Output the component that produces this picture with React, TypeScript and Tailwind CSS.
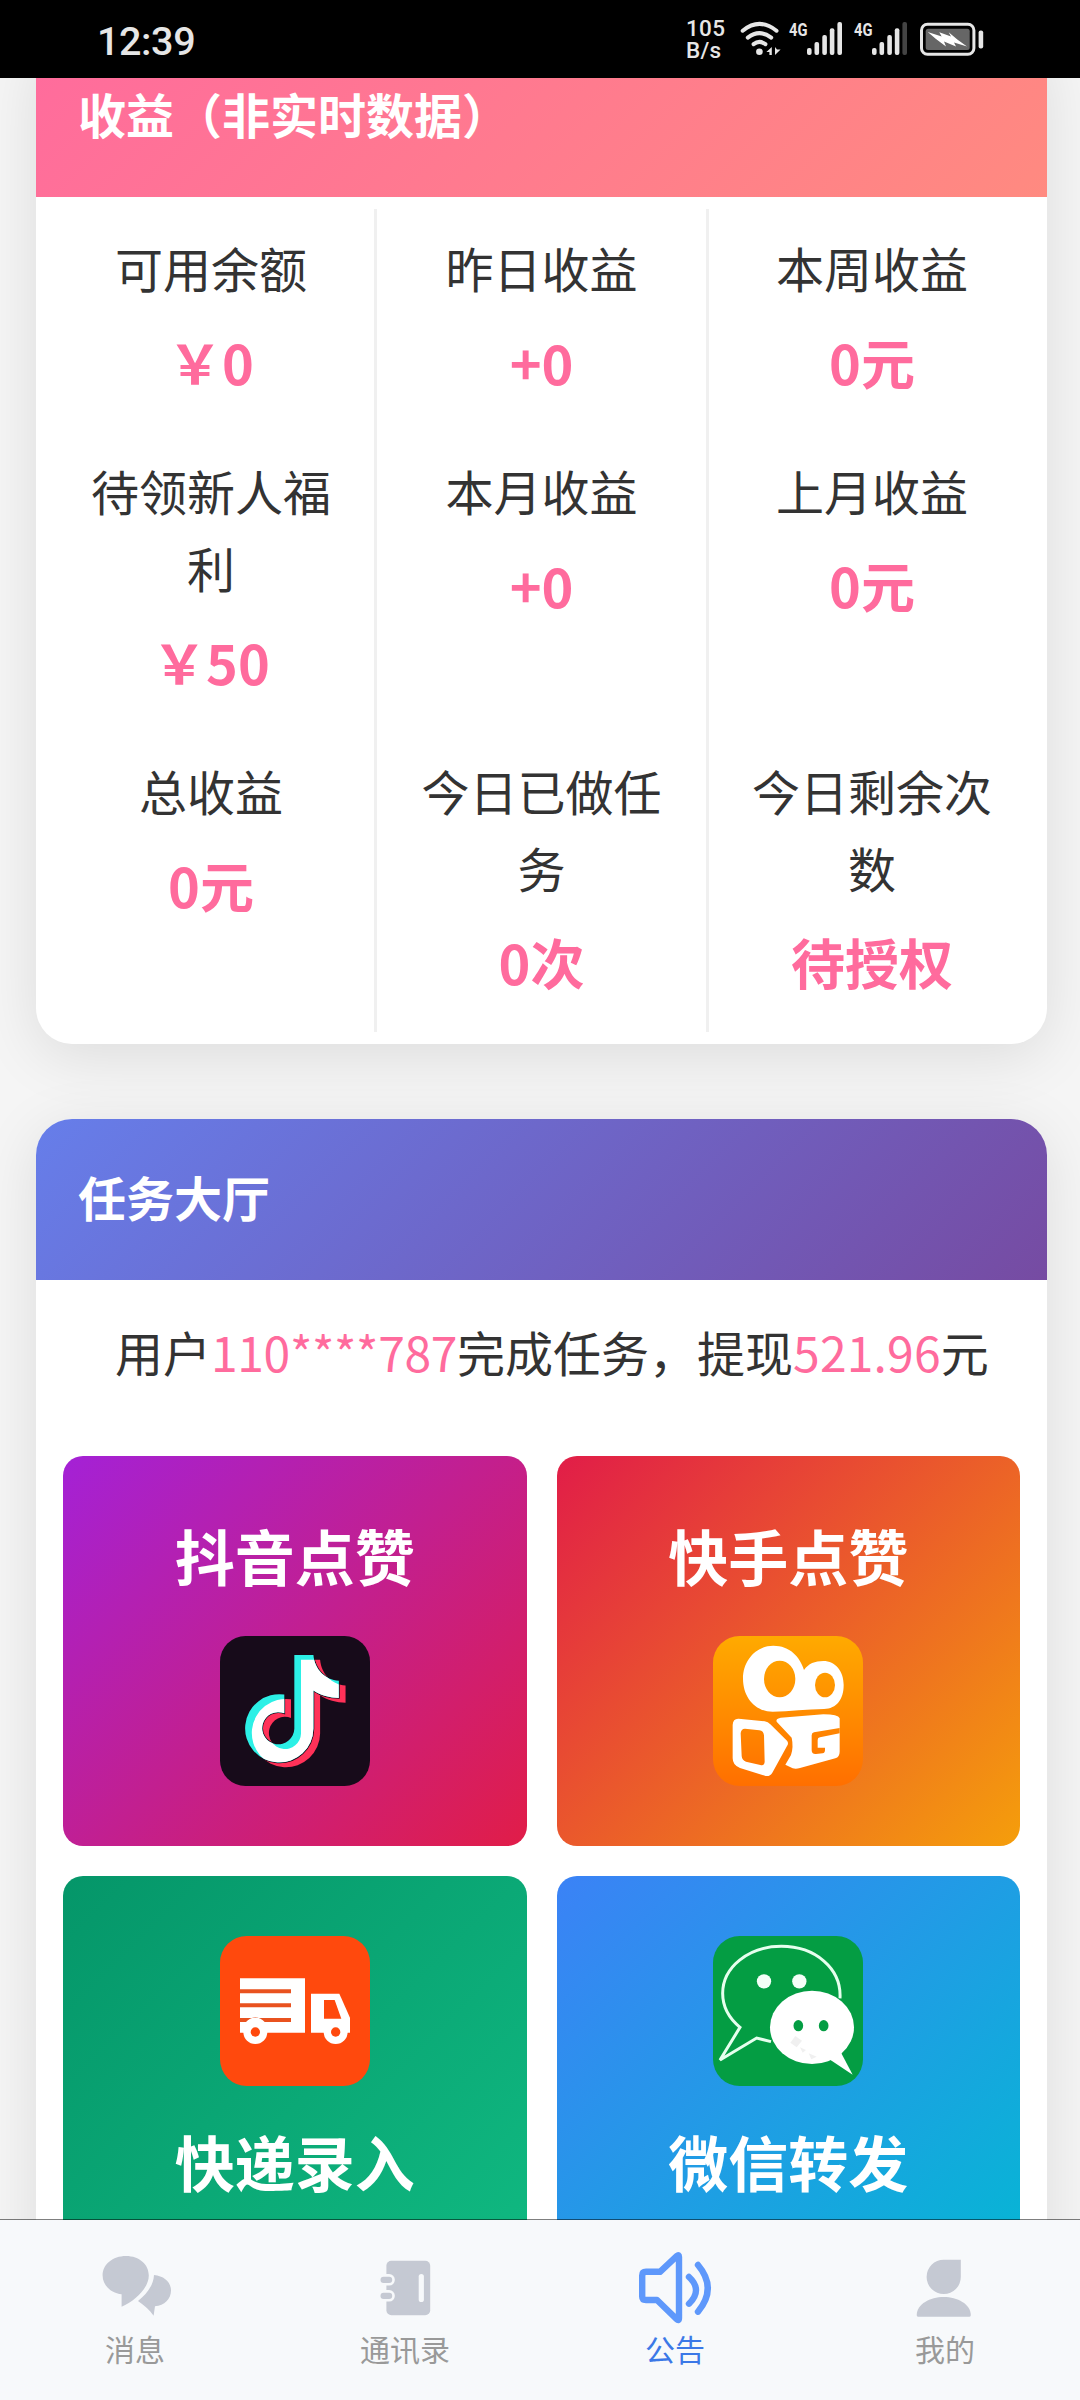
import React from "react";

type Stat = { label: string; value: string };

const stats: Stat[] = [
  { label: "可用余额", value: "￥0" },
  { label: "昨日收益", value: "+0" },
  { label: "本周收益", value: "0元" },
  { label: "待领新人福利", value: "￥50" },
  { label: "本月收益", value: "+0" },
  { label: "上月收益", value: "0元" },
  { label: "总收益", value: "0元" },
  { label: "今日已做任务", value: "0次" },
  { label: "今日剩余次数", value: "待授权" },
];

// left, middle and right column of the stats grid
const columnStyles = [
  "border-[#f0f0f0] pr-6 pl-[27px]",
  "border-[#f0f0f0] px-6",
  "border-transparent pr-[27px] pl-6",
];

const StatusIcons = () => (
  <svg width="250" height="78" viewBox="0 0 250 78" fill="#e6e6e6">
    {/* wifi */}
    <g fill="none" stroke="#e6e6e6" strokeWidth="4" strokeLinecap="round">
      <path d="M7.7 30.7Q24.5 17 41.5 30.7" />
      <path d="M12.8 37.6Q24.5 28.6 36.2 37.6" />
      <path d="M18.6 44.2Q24.5 39.6 30.4 44.2" />
    </g>
    <circle cx="24.4" cy="51.8" r="3.3" />
    <path d="M31.4 52L36.8 47V55H34.4V52Z" />
    <path d="M40 47L42 49.6H45.6L40 55Z" />

    {/* sim 1 */}
    <text x="54" y="36.4" fontSize="18.5" fontWeight="700" fontFamily="Roboto, sans-serif" textLength="18.5" lengthAdjust="spacingAndGlyphs">
      4G
    </text>
    <rect x="72" y="48" width="4.6" height="7" rx="2" />
    <rect x="79.5" y="42" width="4.6" height="13" rx="2" />
    <rect x="87.3" y="35" width="4.6" height="20" rx="2" />
    <rect x="94.8" y="28.3" width="4.6" height="26.7" rx="2" />
    <rect x="102.4" y="22" width="4.6" height="33" rx="2" />

    {/* sim 2 */}
    <text x="119" y="36.4" fontSize="18.5" fontWeight="700" fontFamily="Roboto, sans-serif" textLength="18.5" lengthAdjust="spacingAndGlyphs">
      4G
    </text>
    <rect x="137" y="48" width="4.6" height="7" rx="2" />
    <rect x="144.5" y="42" width="4.6" height="13" rx="2" />
    <rect x="152.3" y="35" width="4.6" height="20" rx="2" />
    <rect x="159.8" y="28.3" width="4.6" height="26.7" rx="2" />
    <rect x="167.4" y="22" width="4.6" height="33" rx="2" fill="#444" />

    {/* battery */}
    <rect x="186.5" y="24.2" width="52.4" height="30" rx="6" fill="none" stroke="#e6e6e6" strokeWidth="3" />
    <rect x="190.7" y="28.7" width="44" height="21.4" rx="2.5" fill="#666" />
    <rect x="243.6" y="30.5" width="4.6" height="18" rx="2" />
    <path d="M192.7 32L206.7 36.4 204.3 32.3 216 36.4 213.7 32.3 222.3 39.5 232 46.6 219 42.5 221 46.6 209 41.5 211 46.6 201 39Z" fill="#fff" />
  </svg>
);

const NOTE =
  "M284 164H341C344 206 376 239 417 241V292C390 292 362 284 341 270V384A102 102 0 1 1 254 282V338A48 48 0 1 0 284 384Z";

const DouyinIcon = () => (
  <svg className="size-[150px]" viewBox="62 107 448 448">
    <defs>
      <clipPath id="note">
        <path d={NOTE} />
      </clipPath>
    </defs>
    <rect x="62" y="107" width="448" height="448" rx="76" fill="#170b1a" />
    <path d={NOTE} fill="#ff3158" transform="translate(20 14)" />
    {/* thin gap between the red layer and the white one */}
    <path d={NOTE} fill="none" stroke="#170b1a" strokeWidth="5" />
    <path d={NOTE} fill="#2cf0e6" />
    <g clipPath="url(#note)">
      <path d={NOTE} fill="#fff" transform="translate(20 14)" />
    </g>
  </svg>
);

const KuaishouIcon = () => (
  <svg className="size-[150px]" viewBox="69 78 450 450">
    <defs>
      <linearGradient id="ks" gradientUnits="userSpaceOnUse" x1="0" y1="78" x2="0" y2="528">
        <stop offset="0" stopColor="#ffaa00" />
        <stop offset="1" stopColor="#ff6f00" />
      </linearGradient>
    </defs>
    <rect x="69" y="78" width="450" height="450" rx="80" fill="url(#ks)" />
    <g fill="#fff">
      <path d="M250 107C299 107 330 140 342 180C355 161 375 153 400 153C436 153 461 183 461 225C461 268 440 296 402 297C350 298 300 304 248 305C196 305 159 262 159 206C159 150 200 107 250 107Z" />
      <path d="M146 326L224 334Q234 335 241 343L291 392Q297 399 291 408L247 488Q240 500 227 498L150 474Q128 466 128 445V345Q129 325 146 326Z" />
      <path d="M272 323L400 313Q445 313 449 325V425Q449 440 436 445L330 474Q318 478 308 475L286 464L303 435Q311 410 305 383L260 335Q256 326 272 323Z" />
    </g>
    <g fill="url(#ks)">
      <ellipse cx="269" cy="207" rx="47" ry="55" />
      <ellipse cx="405" cy="225" rx="30" ry="37" />
      <path d="M165 356L208 361Q221 363 222 376L224 455Q223 468 211 465L168 455Q156 451 155 438L152 370Q153 356 165 356Z" />
      <path d="M449 354L372 367Q365 369 365 376V420Q365 433 378 432L398 430Q405 429 405 420V413H383V390Q383 383 390 382L449 370Z" />
    </g>
  </svg>
);

const TruckIcon = () => (
  <svg className="size-[150px]" viewBox="60 78 450 450">
    <rect x="60" y="78" width="450" height="450" rx="80" fill="#ff490d" />
    <g fill="#fff">
      <path d="M120 205H315V368H120Z" />
      <path d="M333 251H418L450 323V368H333Z" />
      <circle cx="166" cy="366" r="36" />
      <circle cx="407" cy="366" r="36" />
    </g>
    <g fill="#ff490d">
      <circle cx="166" cy="366" r="14" />
      <circle cx="407" cy="366" r="14" />
      <path d="M372 270H404L424 326H372Z" />
      <path d="M120 238H273V250H120ZM120 280H273V292H120ZM120 324H273V336H194A36 36 0 0 0 138 336H120Z" fill="#e9521f" />
    </g>
  </svg>
);

const WechatIcon = () => (
  <svg className="size-[150px]" viewBox="69 78 450 450">
    <rect x="69" y="78" width="450" height="450" rx="80" fill="#049d43" />
    <path
      d="M450 265C455 175 375 109 274 109C175 109 98 172 98 250C98 290 117 325 150 352L90 450L200 384L243 395"
      fill="none"
      stroke="#e6ffee"
      strokeWidth="9"
    />
    <g fill="#f4fff8">
      <circle cx="222" cy="214" r="21.5" />
      <circle cx="328" cy="214" r="21.5" />
    </g>
    <g fill="#fff">
      <ellipse cx="366" cy="352" rx="126" ry="110" />
      <path d="M418 448L488 494L452 426Z" />
    </g>
    <g fill="#049d43">
      <ellipse cx="325" cy="347" rx="14.5" ry="17" />
      <ellipse cx="401" cy="347" rx="14.5" ry="17" />
    </g>
    <g fill="#f0f0f0">
      <path d="M316 378L336 392L320 412L301 398Z" />
      <path d="M330 412L348 420L338 428Z" />
      <path d="M356 430L380 440L364 448Z" />
    </g>
  </svg>
);

const MessageIcon = () => (
  <svg width="90" height="80" viewBox="0 0 90 80" fill="#c5c9d3">
    <path d="M31.6 58.7V46.3C21 45 12.6 37.5 12.6 27.5C12.6 16.5 22.5 8 36 8C49.5 8 58.8 16.5 58.8 27.5C58.8 40 45 53 31.6 58.7Z" />
    <path d="M64 27C74 28 81 34 81 42.5C81 51 74.5 57.5 65 58.3L63.6 67.7C60 62.5 54.5 57.5 48 53C57 46 63.5 37 64 27Z" />
  </svg>
);

const ContactsIcon = () => (
  <svg width="90" height="80" viewBox="0 0 90 80" fill="#c5c9d3">
    <rect x="26.4" y="12.7" width="43.8" height="54.5" rx="5" />
    <g fill="#f7f9fb">
      <rect x="58.7" y="26" width="5.2" height="28" rx="2.6" />
      <rect x="18" y="26" width="16.8" height="11.6" rx="5.6" />
      <rect x="18" y="42" width="16.8" height="11.6" rx="5.6" />
    </g>
    <rect x="20.5" y="28.7" width="11.7" height="6.2" rx="3" />
    <rect x="20.5" y="44.8" width="11.7" height="6.2" rx="3" />
  </svg>
);

const NoticeIcon = () => (
  <svg width="90" height="80" viewBox="0 0 90 80" fill="none" stroke="#5e98fb" strokeWidth="6.4" strokeLinecap="round" strokeLinejoin="round">
    <path d="M16 23.8H30L47 7.8Q49 6 49 9V70Q49 73.5 46.5 71L27 52H16Q12.2 52 12.2 48.5V27.5Q12.2 23.8 16 23.8Z" />
    <path d="M59 29Q73 42 59 55.7" />
    <path d="M68 17Q87.5 40 68 63.7" />
  </svg>
);

const MineIcon = () => (
  <svg width="90" height="80" viewBox="0 0 90 80" fill="#c5c9d3">
    <path d="M43.7 11.7H60.8V28.8A17.1 17.2 0 1 1 43.7 11.7Z" />
    <path d="M18 68.7Q16.7 68.7 16.7 67C17 56 30 49 43.7 49C57.5 49 70.5 56 70.8 67Q70.8 68.7 69.5 68.7Z" />
  </svg>
);

const tabs = [
  { label: "消息", icon: <MessageIcon />, active: false },
  { label: "通讯录", icon: <ContactsIcon />, active: false },
  { label: "公告", icon: <NoticeIcon />, active: true },
  { label: "我的", icon: <MineIcon />, active: false },
];

const App = () => {
  return (
    <div className="flex h-[2400px] w-[1080px] flex-col overflow-hidden bg-[#f5f5f5] font-['Noto_Sans_CJK_SC',sans-serif] text-[48px] leading-[76.8px] text-[#333]">
      {/* Status bar */}
      <header className="z-10 flex h-[78px] shrink-0 items-center bg-black pl-[97px] font-['Roboto',sans-serif] font-medium text-[#e6e6e6]">
        <div className="w-[589px] pt-1.5 text-[39.5px] leading-none tracking-[-0.4px]">12:39</div>
        <div className="w-[49px] text-[22.5px] leading-[22px] tracking-[0.3px]">
          <div>105</div>
          <div>B/s</div>
        </div>
        <StatusIcons />
      </header>

      {/* Scrolled content */}
      <main className="min-h-0 flex-1 overflow-hidden pr-[33px] pl-9">
        <section className="-mt-[42px] overflow-hidden rounded-[36px] bg-white shadow-[0_12px_60px_rgba(0,0,0,0.1)]">
          <h2 className="h-[161px] bg-[linear-gradient(135deg,#ff6b9d,#ff8a80)] px-[42px] pt-[39px] font-bold text-white">
            收益（非实时数据）
          </h2>
          <div className="grid grid-cols-3 py-3 pr-1.5 pl-[9px]">
            {stats.map((item, i) => (
              <div
                key={item.label}
                className={`border-r-[3px] pt-5 pb-7 text-center ${columnStyles[i % 3]}`}
              >
                <div>{item.label}</div>
                <div className="mt-[13px] -mb-px text-[54px] leading-[86.4px] font-bold text-[#ff6b9d]">
                  {item.value}
                </div>
              </div>
            ))}
          </div>
        </section>

        <section className="mt-[75px] overflow-hidden rounded-[36px] bg-white shadow-[0_12px_60px_rgba(0,0,0,0.1)]">
          <h2 className="h-[161px] bg-[linear-gradient(135deg,#667eea,#764ba2)] px-[42px] pt-[39px] font-bold text-white">
            任务大厅
          </h2>
          <p className="h-44 pt-[33px] pl-[79px] whitespace-nowrap">
            用户<span className="tracking-[-0.35px] text-[#ff6b9d]">110****787</span>完成任务，提现
            <span className="tracking-[0.2px] text-[#ff6b9d]">521.96</span>元
          </p>
          <div className="grid grid-cols-2 gap-[30px] px-[27px] pb-[27px] text-[60px] leading-[84px] font-bold text-white">
            <div className="flex h-[390px] flex-col items-center gap-[39px] rounded-[20px] bg-[linear-gradient(135deg,#a421d6,#e11d48)] pt-[57px]">
              <div>抖音点赞</div>
              <DouyinIcon />
            </div>
            <div className="flex h-[390px] flex-col items-center gap-[39px] rounded-[20px] bg-[linear-gradient(135deg,#e11d48,#f59e0b)] pt-[57px]">
              <div>快手点赞</div>
              <KuaishouIcon />
            </div>
            <div className="flex h-[390px] flex-col items-center gap-[33px] rounded-[20px] bg-[linear-gradient(135deg,#059669,#10b981)] pt-[60px]">
              <TruckIcon />
              <div>快递录入</div>
            </div>
            <div className="flex h-[390px] flex-col items-center gap-[33px] rounded-[20px] bg-[linear-gradient(135deg,#3b82f6,#06b6d4)] pt-[60px]">
              <WechatIcon />
              <div>微信转发</div>
            </div>
          </div>
        </section>
      </main>

      {/* Tab bar */}
      <nav className="z-10 -mt-px grid h-[181px] shrink-0 grid-cols-4 border-t border-black/50 bg-[#f7f9fb] bg-clip-padding text-[30px] leading-[41px]">
        {tabs.map((tab) => (
          <div
            key={tab.label}
            className={`flex flex-col items-center pt-7 ${
              tab.active ? "text-[#3b78e7]" : "text-[#999]"
            }`}
          >
            {tab.icon}
            <span>{tab.label}</span>
          </div>
        ))}
      </nav>
    </div>
  );
};

export default App;
